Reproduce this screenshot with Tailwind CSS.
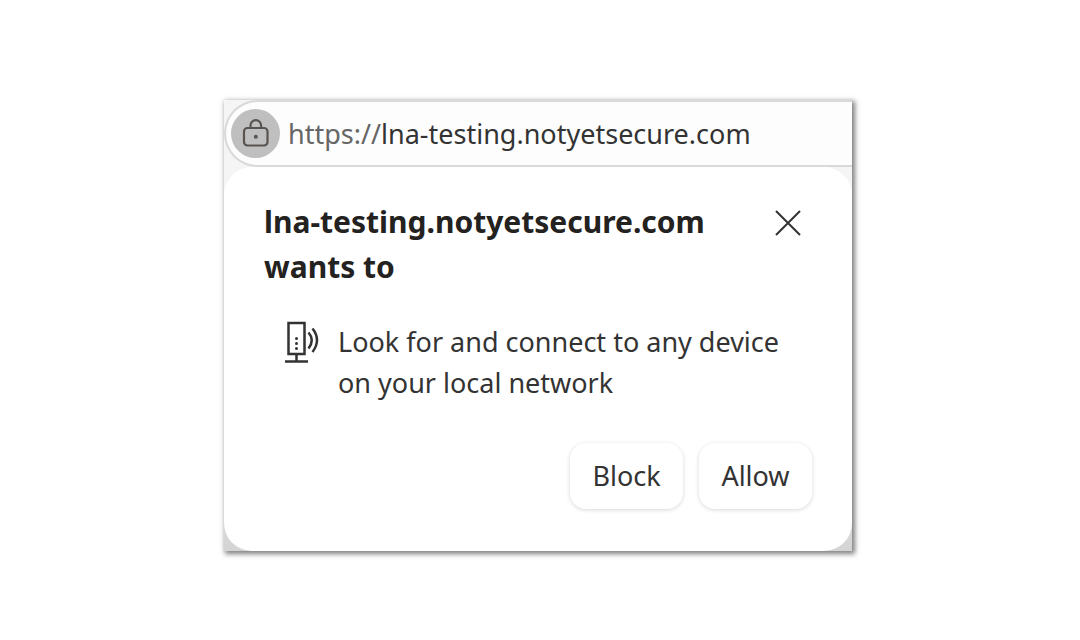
<!DOCTYPE html>
<html lang="en">
<head>
<meta charset="utf-8">
<meta name="viewport" content="width=device-width, initial-scale=1">
<title>Local network permission</title>
<script src="https://cdn.jsdelivr.net/npm/@tailwindcss/browser@4"></script>
</head>
<body class="min-h-screen bg-white pt-[100px] pr-1 pb-12 font-['Noto_Sans','Open_Sans',sans-serif] text-[#333]">
<main class="mx-auto max-w-[628px] bg-linear-to-b from-[#f5f5f5] from-50% to-[#d4d4d4] shadow-[2px_2px_5px_1px_rgba(0,0,0,0.5)]">
  <header class="flex items-center gap-2 rounded-l-full border-2 border-r-0 border-[#d9d9d9] bg-[#fdfdfd] py-[7px] pl-[5px]">
    <button type="button" aria-label="Site information" class="flex size-[49px] shrink-0 items-center justify-center rounded-full bg-[#bfbfbf]">
      <svg class="size-8" viewBox="0 0 32 32" fill="none" stroke="#5a5451" stroke-width="2.200" aria-hidden="true">
        <rect x="4" y="10" width="23.500" height="17.500" rx="3.500"/>
        <path d="M10.500 10V7.500a5.300 5.300 0 0 1 10.600 0V10"/>
        <circle cx="15.800" cy="18.700" r="2" fill="#5a5451" stroke="none"/>
      </svg>
    </button>
    <p class="text-[27px] leading-9"><span class="text-[#666]">https://</span>lna-testing.notyetsecure.com</p>
  </header>
  <section class="rounded-[28px] bg-white px-10 pt-8 pb-[42px]" aria-labelledby="title">
    <div class="flex items-start justify-between gap-6 pr-1">
      <h1 id="title" class="text-[30px] leading-[45px] font-bold text-[#242220]">lna-testing.notyetsecure.com<br>wants to</h1>
      <button type="button" aria-label="Close" class="mt-1 flex size-10 shrink-0 items-center justify-center">
        <svg class="size-7" viewBox="0 0 28 28" fill="none" stroke="#333" stroke-width="2" aria-hidden="true"><path d="M2 2l24 24M26 2L2 26"/></svg>
      </button>
    </div>
    <div class="mt-8 flex items-start gap-[18px] pl-5">
      <svg class="h-11 w-9 shrink-0" viewBox="0 0 36 44" fill="none" stroke="#333" stroke-width="2.500" aria-hidden="true">
        <path d="M4.500 2h16v31h-16zM12.500 33v7M1 40.500h23"/>
        <path d="M24.500 11.500q6.500 7.500 0 16M28.500 7.500q9 11.500 0 23.500"/>
        <g fill="#333" stroke="none"><circle cx="12.500" cy="17.500" r="1.500"/><circle cx="12.500" cy="22.500" r="1.500"/><circle cx="12.500" cy="27.500" r="1.500"/></g>
      </svg>
      <p class="text-[27px] leading-[41px]">Look for and connect to any device<br>on your local network</p>
    </div>
    <div class="mt-10 flex justify-end gap-4">
      <button type="button" class="h-[66px] w-[113px] rounded-2xl bg-white text-[27px] shadow-[0_1px_4px_rgba(0,0,0,0.16)]">Block</button>
      <button type="button" class="h-[66px] w-[113px] rounded-2xl bg-white text-[27px] shadow-[0_1px_4px_rgba(0,0,0,0.16)]">Allow</button>
    </div>
  </section>
</main>
</body>
</html>
